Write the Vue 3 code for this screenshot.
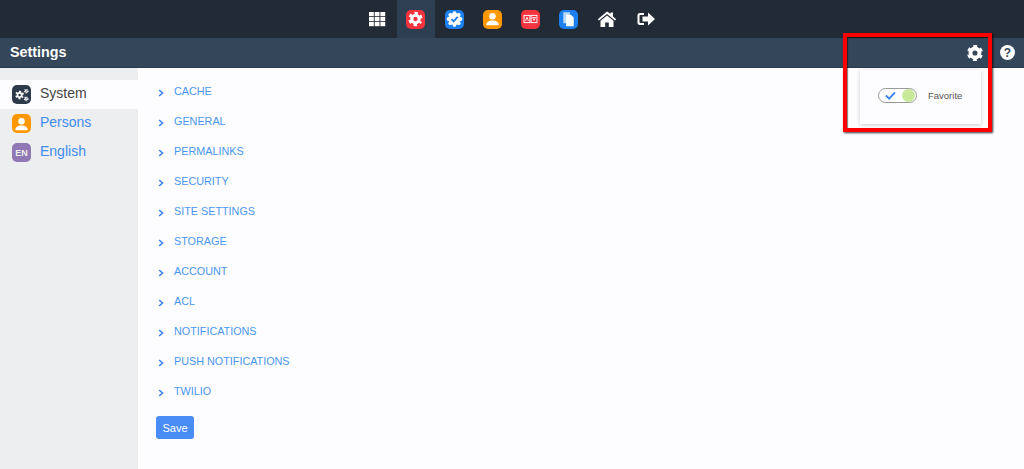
<template>
  <div class="page">
    <header class="topbar">
      <button v-for="t in tabs" :key="t.id" class="tab" :class="{ active: t.id === 'settings' }">
        <span v-if="t.bg" class="app" :style="{ background: t.bg }">
          <svg viewBox="0 0 20 20" width="20" height="20" v-html="t.svg"></svg>
        </span>
        <svg v-else viewBox="0 0 20 20" width="20" height="20" v-html="t.svg"></svg>
      </button>
    </header>
    <div class="subbar">
      <span class="title">Settings</span>
      <div class="tools">
        <svg class="tool" viewBox="0 0 20 20" width="16" height="16" v-html="toolGear"></svg>
        <svg class="tool" viewBox="0 0 20 20" width="15" height="15"><circle cx="10" cy="10" r="10" fill="#fff" /><text x="10" y="16" text-anchor="middle" class="q">?</text></svg>
      </div>
    </div>
    <div class="body">
      <nav class="side">
        <a v-for="s in side" :key="s.label" class="side-row" :class="{ on: s.on }">
          <span class="side-icon" :style="{ background: s.bg }">
            <span v-if="s.text" class="en">{{ s.text }}</span>
            <svg v-else viewBox="0 0 20 20" width="20" height="20" v-html="s.svg"></svg>
          </span>
          <span class="side-label">{{ s.label }}</span>
        </a>
      </nav>
      <main class="main">
        <ul class="list">
          <li v-for="item in items" :key="item">
            <svg class="chev" viewBox="0 0 8 10" width="6" height="8"><path d="M1.500 1 L6 5 L1.500 9" fill="none" stroke="#3f86ee" stroke-width="2.200" /></svg>
            <span>{{ item }}</span>
          </li>
        </ul>
        <button class="save">Save</button>
      </main>
    </div>
    <div class="popup">
      <span class="toggle">
        <svg viewBox="0 0 12 10" width="11" height="9"><path d="M1 5 L4.500 8.500 L11 1.500" fill="none" stroke="#3a82f0" stroke-width="2" /></svg>
        <i class="knob"></i>
      </span>
      <span class="fav">Favorite</span>
    </div>
    <div class="mark"></div>
  </div>
</template>

<script setup>
const cog = (cx, cy, ring, teeth, hole, color) => {
  const r = (ring + hole) / 2
  const tr = (teeth + ring) / 2 - 0.5
  const c = 2 * Math.PI * tr
  const dash = c / 6 * 0.52
  return `<circle cx="${cx}" cy="${cy}" r="${r}" fill="none" stroke="${color}" stroke-width="${ring - hole}"/><circle cx="${cx}" cy="${cy}" r="${tr}" fill="none" stroke="${color}" stroke-width="${teeth - ring + 1}" stroke-dasharray="${dash} ${c / 6 - dash}" stroke-dashoffset="${dash / 2}" transform="rotate(30 ${cx} ${cy})"/>`
}
const toolGear = cog(10, 10, 8, 10, 3.200, '#fff')
const person = '<circle cx="10" cy="7" r="3.400" fill="#fff"/><path fill="#fff" d="M3.500 16.500c0-3.500 2.500-5 6.500-5s6.500 1.500 6.500 5z"/>'
const tabs = [
  { id: 'apps', svg: '<g fill="#fff"><rect x="2" y="3" width="4.800" height="4.200"/><rect x="7.700" y="3" width="4.800" height="4.200"/><rect x="13.400" y="3" width="4.800" height="4.200"/><rect x="2" y="8" width="4.800" height="4.200"/><rect x="7.700" y="8" width="4.800" height="4.200"/><rect x="13.400" y="8" width="4.800" height="4.200"/><rect x="2" y="13" width="4.800" height="4.200"/><rect x="7.700" y="13" width="4.800" height="4.200"/><rect x="13.400" y="13" width="4.800" height="4.200"/></g>' },
  { id: 'settings', bg: '#f5333f', svg: cog(10, 10, 5.500, 7.500, 2.300, '#fff') },
  { id: 'check', bg: '#1c80f0', svg: '<g fill="#fff"><circle cx="10" cy="10" r="6.500"/><circle cx="10" cy="3.800" r="2"/><circle cx="16.200" cy="10" r="2"/><circle cx="10" cy="16.200" r="2"/><circle cx="3.800" cy="10" r="2"/><circle cx="5.600" cy="5.600" r="2"/><circle cx="14.400" cy="5.600" r="2"/><circle cx="5.600" cy="14.400" r="2"/><circle cx="14.400" cy="14.400" r="2"/></g><path d="M6.800 10.200l2.300 2.300 4.200-4.700" fill="none" stroke="#1c80f0" stroke-width="2"/>' },
  { id: 'person', bg: '#ff9800', svg: person },
  { id: 'ab', bg: '#f5333f', svg: '<rect x="3.200" y="6.200" width="6.200" height="7.600" fill="none" stroke="#fff" stroke-width="1"/><rect x="10.600" y="6.200" width="6.200" height="7.600" fill="none" stroke="#fff" stroke-width="1"/><path d="M4.800 12l1.500-4 1.500 4M12.200 8.500h3l-1.500 3z" fill="none" stroke="#fff" stroke-width=".9"/>' },
  { id: 'copy', bg: '#1c80f0', svg: '<path fill="#bcd8fa" d="M4.500 3h7v11.500h-7z"/><path fill="#fff" d="M7.500 5.500h5L15.500 8.500V17.500h-8z"/>' },
  { id: 'home', svg: '<path fill="#fff" d="M10 2.500L.800 10.300l1.200 1.300L10 5l8 6.600 1.200-1.300-3.200-2.700V3.500h-2.300v1.200z"/><path fill="#fff" d="M10 6.500l-6.500 5.300V18h4.700v-4.500h3.600V18h4.700v-6.200z"/>' },
  { id: 'out', svg: '<path fill="#fff" d="M8 4H4a2.500 2.500 0 0 0-2.500 2.500v7A2.500 2.500 0 0 0 4 16h4v-2H4.500a1 1 0 0 1-1-1V7a1 1 0 0 1 1-1H8z"/><path fill="#fff" d="M12 3.500l7 6.500-7 6.500v-4H6.500v-5H12z"/>' }
]
const side = [
  { label: 'System', on: true, bg: '#2c3a4b', svg: cog(8, 10, 3.200, 4.600, 1.300, '#fff') + cog(15, 6, 1.500, 2.500, .6, '#fff') + cog(15, 14, 1.500, 2.500, .6, '#fff') },
  { label: 'Persons', bg: '#ff9800', svg: person },
  { label: 'English', bg: '#8f78b4', text: 'EN' }
]
const items = ['CACHE', 'GENERAL', 'PERMALINKS', 'SECURITY', 'SITE SETTINGS', 'STORAGE', 'ACCOUNT', 'ACL', 'NOTIFICATIONS', 'PUSH NOTIFICATIONS', 'TWILIO']
</script>

<style>
html, body { margin: 0; background: #fdfdff; }
</style>

<style scoped>
.page { position: relative; width: 1024px; height: 469px; overflow: hidden; font-family: "Liberation Sans", Arial, sans-serif; background: #fdfdff; }
.topbar { height: 38px; background: #222b35; display: flex; justify-content: center; padding-right: 1px; box-sizing: border-box; }
.tab { width: 38.300px; height: 38px; padding: 0; border: 0; background: transparent; display: flex; align-items: center; justify-content: center; }
.tab.active { background: #2e3f51; }
.tab svg { display: block; }
.app { width: 19px; height: 19px; border-radius: 5px; display: flex; align-items: center; justify-content: center; overflow: hidden; }
.subbar { height: 30px; background: #34465a; display: flex; align-items: center; justify-content: space-between; padding: 0 9px 2px 10px; box-sizing: border-box; border-bottom: 1px solid #2c3b4c; }
.title { color: #fff; font-size: 14.300px; font-weight: 700; }
.tools { display: flex; align-items: center; gap: 17.500px; margin-top: 2px; }
.tool { display: block; }
.q { font: 700 16px "Liberation Sans", sans-serif; fill: #34465a; }
.body { display: flex; height: 401px; }
.side { width: 138px; background: #eceeef; padding-top: 12px; box-sizing: border-box; flex: none; }
.side-row { height: 29px; display: flex; align-items: center; gap: 9px; padding-left: 12px; font-size: 14px; color: #3f8cf0; }
.side-label { position: relative; top: -1.500px; }
.side-row.on { background: #fdfdff; color: #444; }
.side-icon { width: 19px; height: 19px; border-radius: 5px; display: flex; align-items: center; justify-content: center; overflow: hidden; }
.en { color: #eee; font-size: 9px; font-weight: 700; }
.main { flex: 1; padding: 9px 18px; }
.list { list-style: none; margin: 0; padding: 0; }
.list li { height: 30px; display: flex; align-items: center; font-size: 10.800px; color: #4a96f0; }
.list li span { position: relative; top: -1px; }
.chev { margin: 2px 10px 0 2px; }
.save { margin-top: 9px; width: 38px; height: 23px; padding: 0; border: 0; border-radius: 3px; background: #4a8cf5; color: #fff; font: 11px "Liberation Sans", sans-serif; display: block; }
.popup { position: absolute; left: 860px; top: 70px; width: 121px; height: 54px; background: #fdfdff; box-shadow: 0 1px 4px rgba(0,0,0,.2); display: flex; align-items: center; padding: 0 0 4px 18px; box-sizing: border-box; gap: 11px; }
.toggle { width: 39px; height: 15px; border: 1px solid #9a9a9a; border-radius: 9px; position: relative; display: flex; align-items: center; padding-left: 6px; box-sizing: border-box; background: #fff; }
.knob { position: absolute; right: 1px; top: 0; width: 13px; height: 13px; border-radius: 50%; background: #c8e89a; }
.fav { font-size: 9.500px; color: #555; }
.mark { position: absolute; left: 843px; top: 33px; width: 149px; height: 99px; box-sizing: border-box; border: 4px solid #f00; box-shadow: 1px 1px 2px rgba(0,0,0,.8), inset 1px 1px 1px rgba(0,0,0,.5); }
</style>
